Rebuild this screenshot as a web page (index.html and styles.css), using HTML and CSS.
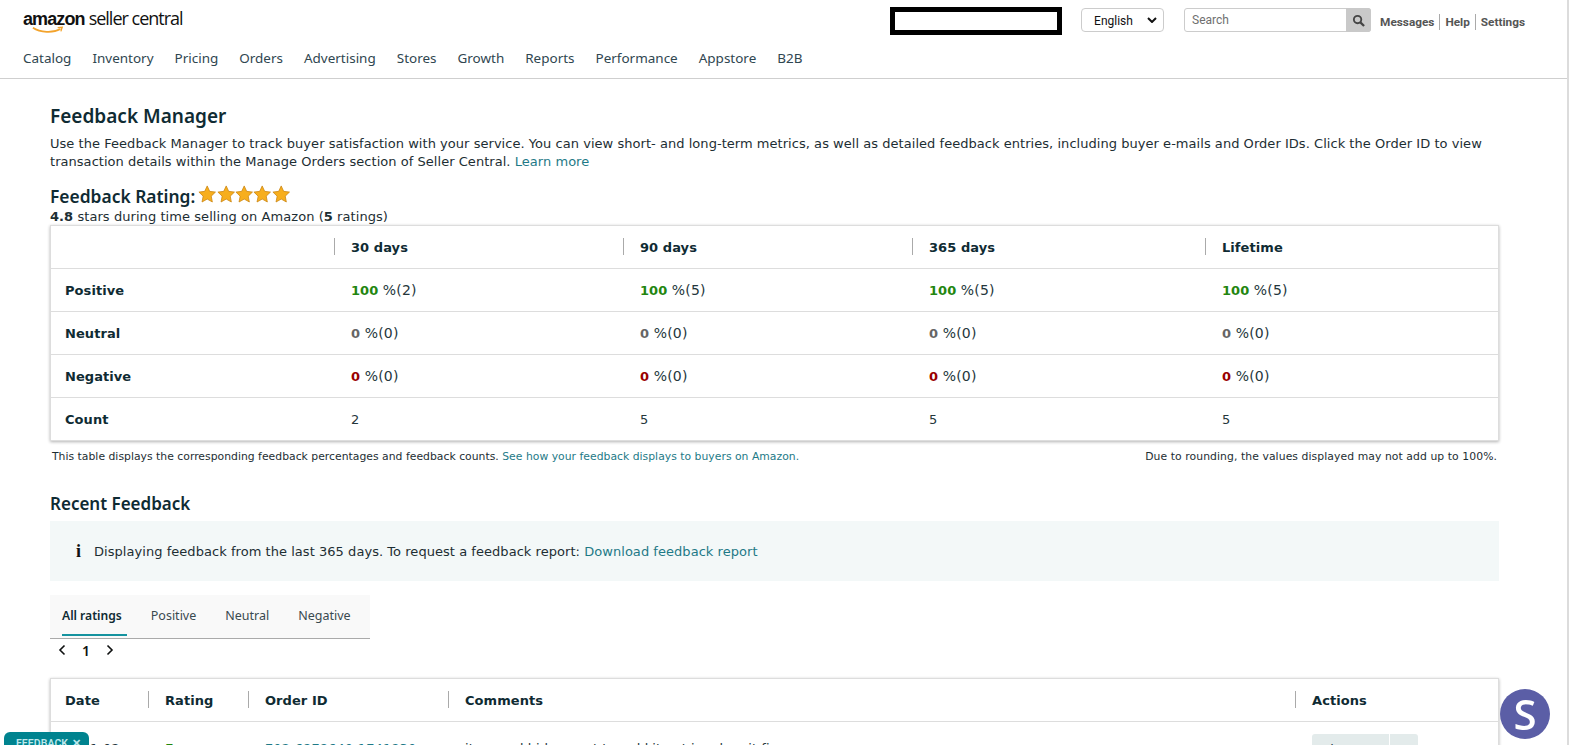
FILE: index.html
```html
<!DOCTYPE html>
<html lang="en">
<head>
<meta charset="utf-8">
<title>Feedback Manager</title>
<link rel="stylesheet" href="styles.css">
</head>
<body>
<div class="page">
<header class="header">
  <div class="topbar">
    <div class="logo">
      <span class="logo-amazon">amazon<svg class="smile" viewBox="0 0 36 8"><path d="M1 1.5C9 7 23 7.5 31 3" fill="none" stroke="#f3a32c" stroke-width="1.8"/><path d="M28 1.5l5-.5-1.5 4.5" fill="none" stroke="#f3a32c" stroke-width="1.4"/></svg></span>
      <span class="logo-seller">seller central</span>
    </div>
    <div class="top-right">
      <div class="redact"></div>
      <div class="lang"><span class="lang-text">English</span><svg class="chev" viewBox="0 0 10 6"><path d="M1 1l4 4 4-4" fill="none" stroke="#111" stroke-width="2"/></svg></div>
      <div class="search">
        <span class="search-ph">Search</span>
        <span class="search-btn"><svg viewBox="0 0 14 14" width="13" height="13"><circle cx="6" cy="6" r="4" fill="none" stroke="#444" stroke-width="2"/><path d="M9 9l4 4" stroke="#444" stroke-width="2.4"/></svg></span>
      </div>
      <nav class="toplinks"><a>Messages</a><a>Help</a><a>Settings</a></nav>
    </div>
  </div>
  <nav class="mainnav">
    <a>Catalog</a><a>Inventory</a><a>Pricing</a><a>Orders</a><a>Advertising</a><a>Stores</a><a>Growth</a><a>Reports</a><a>Performance</a><a>Appstore</a><a>B2B</a>
  </nav>
</header>
<main class="main">
  <h1 class="title">Feedback Manager</h1>
  <p class="intro">Use the Feedback Manager to track buyer satisfaction with your service. You can view short- and long-term metrics, as well as detailed feedback entries, including buyer e-mails and Order IDs. Click the Order ID to view transaction details within the Manage Orders section of Seller Central. <a class="link">Learn more</a></p>
  <div class="rating-head">
    <span class="h2">Feedback Rating:</span>
    <span class="stars">
      <svg viewBox="0 0 20 20"><use href="#star"/></svg><svg viewBox="0 0 20 20"><use href="#star"/></svg><svg viewBox="0 0 20 20"><use href="#star"/></svg><svg viewBox="0 0 20 20"><use href="#star"/></svg><svg viewBox="0 0 20 20"><use href="#star"/></svg>
    </span>
  </div>
  <p class="rating-sub"><b>4.8</b> stars during time selling on Amazon (<b>5</b> ratings)</p>
  <div class="card metrics">
    <div class="row mrow"><div class="cell"></div><div class="cell th sep">30 days</div><div class="cell th sep">90 days</div><div class="cell th sep">365 days</div><div class="cell th sep">Lifetime</div></div>
    <div class="row mrow"><div class="cell rh">Positive</div><div class="cell"><b class="good">100</b> <span class="pct">%(2)</span></div><div class="cell"><b class="good">100</b> <span class="pct">%(5)</span></div><div class="cell"><b class="good">100</b> <span class="pct">%(5)</span></div><div class="cell"><b class="good">100</b> <span class="pct">%(5)</span></div></div>
    <div class="row mrow"><div class="cell rh">Neutral</div><div class="cell"><b class="mid">0</b> <span class="pct">%(0)</span></div><div class="cell"><b class="mid">0</b> <span class="pct">%(0)</span></div><div class="cell"><b class="mid">0</b> <span class="pct">%(0)</span></div><div class="cell"><b class="mid">0</b> <span class="pct">%(0)</span></div></div>
    <div class="row mrow"><div class="cell rh">Negative</div><div class="cell"><b class="bad">0</b> <span class="pct">%(0)</span></div><div class="cell"><b class="bad">0</b> <span class="pct">%(0)</span></div><div class="cell"><b class="bad">0</b> <span class="pct">%(0)</span></div><div class="cell"><b class="bad">0</b> <span class="pct">%(0)</span></div></div>
    <div class="row mrow"><div class="cell rh">Count</div><div class="cell">2</div><div class="cell">5</div><div class="cell">5</div><div class="cell">5</div></div>
  </div>
  <div class="note"><span>This table displays the corresponding feedback percentages and feedback counts. <a class="link">See how your feedback displays to buyers on Amazon.</a></span><span class="note-right">Due to rounding, the values displayed may not add up to 100%.</span></div>
  <h2 class="h2 recent">Recent Feedback</h2>
  <div class="info"><span class="info-i">i</span><span>Displaying feedback from the last 365 days. To request a feedback report: <a class="link">Download feedback report</a></span></div>
  <div class="tabs"><a class="tab active">All ratings</a><a class="tab">Positive</a><a class="tab">Neutral</a><a class="tab">Negative</a></div>
  <div class="pager"><svg viewBox="0 0 8 12" width="8" height="12"><path d="M6.500 1.500L2 6l4.500 4.500" fill="none" stroke="#0f1111" stroke-width="1.600"/></svg><span>1</span><svg viewBox="0 0 8 12" width="8" height="12"><path d="M1.500 1.500L6 6l-4.500 4.500" fill="none" stroke="#0f1111" stroke-width="1.600"/></svg></div>
  <div class="card orders">
    <div class="row orow"><div class="cell th">Date</div><div class="cell th sep">Rating</div><div class="cell th sep">Order ID</div><div class="cell th sep">Comments</div><div class="cell th sep">Actions</div></div>
    <div class="row orow body-row"><div class="cell">2021-02</div><div class="cell"><b class="good">5</b></div><div class="cell"><a class="link">702-6878640-1741830</a></div><div class="cell">item and bid correct travel kit get in a bag it fine</div><div class="cell"><span class="action"><span class="action-main">Share</span><span class="action-side"></span></span></div></div>
  </div>
</main>
</div>
<div class="fb-tab">FEEDBACK <span class="fb-x">✕</span></div>
<div class="avatar">S</div>
<svg class="defs" width="0" height="0"><defs><path id="star" d="M10 1l2.700 5.900 6.300.8-4.600 4.400 1.200 6.400L10 15.300l-5.600 3.200 1.200-6.400L1 7.700l6.300-.8z" fill="#f7ae1d" stroke="#c9820c" stroke-width=".8"/></defs></svg>
</body>
</html>
```
FILE: styles.css
```css
* { box-sizing: border-box; }
html, body { margin: 0; height: 745px; overflow: hidden; background: #fff; }
body { font-family: "DejaVu Sans", Verdana, sans-serif; font-size: 13px; letter-spacing: .065px; color: #0f1111; }
a { text-decoration: none; }
.page { width: 1569px; height: 745px; overflow: hidden; border-right: 2px solid #dcdcdc; }
.header { height: 79px; border-bottom: 1px solid #cfcfcf; }
.topbar { display: flex; justify-content: space-between; height: 40px; padding: 0 37px 0 23px; letter-spacing: 0; }
.logo { display: flex; align-items: flex-start; padding-top: 9px; gap: 4px; color: #111; }
.logo-amazon { position: relative; font: bold 18px/20px "Liberation Sans", sans-serif; letter-spacing: -.9px; }
.smile { position: absolute; left: 9px; top: 17px; width: 33px; height: 8px; }
.logo-seller { font: 18px/18px "Open Sans", sans-serif; letter-spacing: -1px; }
.top-right { display: flex; align-items: flex-start; }
.redact { width: 172px; height: 28px; margin-top: 7px; border: 5px solid #000; background: #fff; }
.lang { display: flex; align-items: center; justify-content: space-between; width: 83px; height: 24px; margin: 8px 0 0 19px; padding: 0 6px 0 12px; border: 1px solid #ccc; border-radius: 4px; font: 12px/22px "Roboto", sans-serif; color: #111; }
.lang-text { padding-top: 1px; }
.chev { width: 10px; height: 6px; }
.search { display: flex; justify-content: space-between; align-items: stretch; width: 187px; height: 24px; margin: 8px 0 0 20px; border: 1px solid #ccc; border-radius: 3px; }
.search-ph { padding-left: 7px; font: 12px/22px "Roboto", sans-serif; color: #6f6f6f; }
.search-btn { display: flex; align-items: center; justify-content: center; width: 25px; margin: -1px -1px -1px 0; background: #c9c9c9; border-radius: 0 3px 3px 0; }
.toplinks { display: flex; margin: 14px 0 0 9px; font: 700 11.800px/16px "Roboto", sans-serif; color: #555; }
.toplinks a { padding: 0 5px; border-left: 1px solid #aaa; }
.toplinks a:first-child { padding-left: 0; border-left: 0; }
.mainnav { display: flex; gap: 21px; padding: 9px 0 0 23px; font: 13.470px/18px "Noto Sans", sans-serif; letter-spacing: 0; color: #2f4650; }
.main { padding: 25px 68px 0 50px; }
.title { margin: 0; font: 600 19px/24px "Noto Sans", sans-serif; letter-spacing: 0; color: #0f2b33; }
.h2 { font: 600 17.400px/22px "Noto Sans", sans-serif; letter-spacing: 0; color: #0f2b33; }
.intro { margin: 7px 0 0; line-height: 18px; letter-spacing: .04px; color: #1d2e33; }
.link { color: #1e7a87; }
.rating-head { display: flex; align-items: flex-start; margin-top: 14px; height: 24px; }
.stars { display: flex; margin: 0 0 0 3px; }
.stars svg { width: 18.400px; height: 18.400px; }
.rating-sub { margin: 0; line-height: 16px; color: #1d2e33; }
.rating-sub b, .th, .rh { font-weight: 700; }
.card { border: 1px solid #ddd; box-shadow: 0 1px 3px rgba(0,0,0,.3); background: #fff; }
.row { display: grid; }
.mrow { grid-template-columns: 283px 289px 289px 293px 1fr; height: 43px; border-top: 1px solid #ddd; }
.mrow:first-child { border-top: 0; height: 42px; }
.cell { position: relative; display: flex; align-items: center; padding-left: 17px; color: #24363b; white-space: pre; }
.mrow .cell:first-child, .orow .cell:first-child { padding-left: 14px; }
.pct { margin-left: 4.500px; font-size: 14px; letter-spacing: .2px; }
.th, .rh { color: #0f2b33; }
.sep::before { content: ""; position: absolute; left: 0; top: 12px; height: 17px; width: 1px; background: #aaa; }
.good { color: #23860f; }
.mid { color: #666; }
.bad { color: #990000; }
.note { display: flex; justify-content: space-between; padding: 9px 2px 0; font-size: 10.800px; letter-spacing: .02px; line-height: 14px; color: #1d2e33; }
.note-right { letter-spacing: .08px; }
.recent { margin: 29px 0 0; font-size: 17px; }
.info { display: flex; align-items: center; height: 60px; margin-top: 6px; padding-left: 26px; gap: 10px; letter-spacing: .045px; background: #f3f8f8; color: #1d2e33; }
.info-i { font: bold 18px "Liberation Serif", serif; width: 8px; color: #0f1111; }
.tabs { display: flex; width: 320px; height: 44px; margin-top: 14px; padding-left: 12px; gap: 29px; background: #f9f9f9; border-bottom: 1px solid #aaa; font: 12.500px/42px "Noto Sans", sans-serif; letter-spacing: 0; color: #3a4a50; }
.tab { height: 41px; }
.tab.active { font-size: 12.100px; font-weight: 600; color: #0f2b33; border-bottom: 2px solid #15939f; padding-right: 5px; margin-right: -5px; }
.pager { display: flex; align-items: center; gap: 16px; height: 22px; padding-left: 8px; font: 600 14px "Noto Sans", sans-serif; }
.orders { margin-top: 17px; }
.orow { grid-template-columns: 97px 100px 200px 847px 1fr; }
.orow:first-child { height: 42px; }
.body-row { height: 60px; border-top: 1px solid #ddd; }
.body-row .cell { align-items: flex-start; padding-top: 19px; }
.action { display: flex; margin-top: -7px; height: 30px; }
.action-main { width: 77px; padding: 8px 0 0 10px; background: #e3ebeb; border-radius: 3px 0 0 3px; }
.action-side { width: 28px; margin-left: 1px; background: #e3ebeb; border-radius: 0 3px 3px 0; }
.fb-tab { position: fixed; left: 4px; top: 732px; width: 85px; height: 40px; background: #00838f; border-radius: 6px 6px 0 0; color: #bfe8ec; font: 600 10.500px/24px "Roboto", sans-serif; padding-left: 12px; }
.fb-x { margin-left: 1px; }
.avatar { position: fixed; left: 1500px; top: 689px; width: 50px; height: 50px; border-radius: 50%; background: #5b5ea6; color: #fff; font: 600 42px/50px "Open Sans", sans-serif; text-align: center; }
.defs { position: absolute; }
```
